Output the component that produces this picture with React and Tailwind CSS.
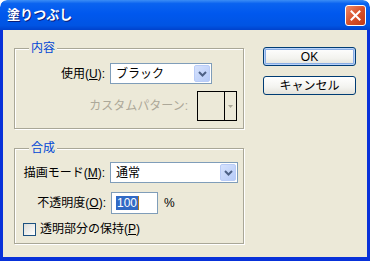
import React from 'react'

const font = "font-['Liberation_Sans','Noto_Sans_CJK_JP',sans-serif]"

function Chevron() {
  return (
    <svg width="9" height="6" viewBox="0 0 9 6">
      <polyline points="1,1 4.5,4.5 8,1" fill="none" stroke="#4D6185" strokeWidth="2" />
    </svg>
  )
}

function Select({ value, width }) {
  return (
    <div className={`flex items-center h-[21px] border border-[#7F9DB9] bg-white ${width}`}>
      <span className="flex-1 pl-[5px] text-[12px] leading-[14px] text-black">{value}</span>
      <span className="flex items-center justify-center w-[16px] h-[17px] mr-[1px] rounded-[2px] bg-[linear-gradient(135deg,#D6E2FD,#B6CBF8)] border border-[#B9CCF7]">
        <Chevron />
      </span>
    </div>
  )
}

function Group({ title, children, className }) {
  return (
    <div className={`relative border border-[#A9A797] shadow-[inset_1px_1px_0_#fff,1px_1px_0_#fff] ${className}`}>
      <span className="absolute top-[-8px] left-[14px] px-[2px] bg-[#ECE9D8] text-[12px] leading-[14px] text-[#0046D5]">
        {title}
      </span>
      {children}
    </div>
  )
}

function Button({ children, primary }) {
  return (
    <button
      className={`w-[93px] h-[19px] rounded-[3px] border border-[#003C74] bg-[linear-gradient(#FFFFFF,#F3F3EF_60%,#E3E2DA)] text-[12px] leading-[14px] text-black ${
        primary ? 'shadow-[inset_0_0_0_1px_#B8D2FA,inset_0_0_0_2px_#89ADE4]' : ''
      }`}
    >
      {children}
    </button>
  )
}

export default function App() {
  return (
    <div className={`w-[370px] h-[261px] flex flex-col rounded-t-[7px] overflow-hidden bg-white ${font}`}>
      {/* Title bar */}
      <div className="h-[30px] flex items-center justify-between pl-[7px] pr-[4px] rounded-t-[7px] bg-[linear-gradient(#3B8DF5_0%,#0A63F0_12%,#0058EE_45%,#0054E3_85%,#0042CC_100%)]">
        <span className="text-[13px] font-bold text-white [text-shadow:1px_1px_0_#0A1E7A]">塗りつぶし</span>
        <span className="flex items-center justify-center w-[21px] h-[21px] rounded-[3px] border border-white bg-[linear-gradient(135deg,#EE8A6A,#D8522C_50%,#C23A16)]">
          <svg width="11" height="11" viewBox="0 0 11 11">
            <path d="M1.5 1.5 L9.5 9.5 M9.5 1.5 L1.5 9.5" stroke="#fff" strokeWidth="2" strokeLinecap="square" />
          </svg>
        </span>
      </div>

      {/* Body */}
      <div className="flex-1 flex bg-[#ECE9D8] border-l-[3px] border-r-[3px] border-b-[4px] border-[#0831D9] pl-[11px] pt-[18px]">
        {/* Left column */}
        <div className="flex flex-col w-[230px] text-[12px] leading-[14px] text-black">
          <Group title="内容" className="h-[81px] pt-[14px]">
            <div className="flex items-center">
              <span className="w-[90px] text-right">
                使用(<span className="underline">U</span>):
              </span>
              <div className="ml-[5px]">
                <Select value="ブラック" width="w-[102px]" />
              </div>
            </div>
            <div className="flex items-center justify-end gap-[9px] pr-[6px] mt-[7px]">
              <span className="text-[#ACA899]">カスタムパターン:</span>
              <div className="flex w-[40px] h-[30px] border border-black">
                <div className="flex-1 border-r border-black" />
                <div className="w-[11px] flex items-center justify-center">
                  <svg width="5" height="3" viewBox="0 0 5 3">
                    <polygon points="0,0 5,0 2.5,3" fill="#ACA899" />
                  </svg>
                </div>
              </div>
            </div>
          </Group>

          <Group title="合成" className="h-[96px] mt-[19px] pt-[13px]">
            <div className="flex items-center">
              <span className="w-[90px] text-right">
                描画モード(<span className="underline">M</span>):
              </span>
              <div className="ml-[5px]">
                <Select value="通常" width="w-[128px]" />
              </div>
            </div>
            <div className="flex items-center mt-[9px]">
              <span className="w-[91px] text-right">
                不透明度(<span className="underline">O</span>):
              </span>
              <div className="ml-[5px] flex items-center w-[47px] h-[22px] border border-[#7F9DB9] bg-white pl-[4px]">
                <span className="bg-[#316AC5] text-white px-[1px]">100</span>
                <span className="w-[1px] h-[14px] bg-[#B07820]" />
              </div>
              <span className="ml-[6px]">%</span>
            </div>
            <div className="flex items-center mt-[8px] pl-[8px]">
              <span className="w-[13px] h-[13px] border border-[#1C5180] bg-[linear-gradient(135deg,#DCDCD7,#FFFFFF)]" />
              <span className="ml-[4px]">
                透明部分の保持(<span className="underline">P</span>)
              </span>
            </div>
          </Group>
        </div>

        {/* Right column */}
        <div className="flex flex-col gap-[10px] ml-[19px] pt-[-1px] mt-[-1px]">
          <Button primary>OK</Button>
          <Button>キャンセル</Button>
        </div>
      </div>
    </div>
  )
}
